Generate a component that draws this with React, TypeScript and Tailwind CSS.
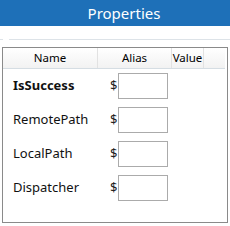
import React from "react";

const rows = [
  { name: "IsSuccess", bold: true },
  { name: "RemotePath", bold: false },
  { name: "LocalPath", bold: false },
  { name: "Dispatcher", bold: false },
];

export default function App() {
  return (
    <div
      className="w-[230px] h-[226px] bg-white flex flex-col overflow-hidden"
      style={{ fontFamily: '"Segoe UI", "Noto Sans", "Open Sans", sans-serif' }}
    >
      <div className="h-[26px] bg-[#1e70b8] flex items-center justify-center pl-[18px]">
        <span className="text-white text-[15px] leading-none">Properties</span>
      </div>
      <div className="mt-[13px] flex h-[1px]">
        <div className="w-[3px] bg-[#dde3e8]" />
        <div className="w-[6px]" />
        <div className="flex-1 bg-[#dde3e8]" />
      </div>
      <div className="mt-[7px] ml-[2px] w-[226px] h-[176px] border border-[#8a8a8a] flex flex-col">
        <div className="h-[21px] mr-[2px] flex border-b border-[#d5dde3] bg-gradient-to-b from-white to-[#f2f2f2] text-[11.5px] text-black leading-none">
          <div className="w-[95px] border-r border-[#e2e2e2] flex items-center justify-center">Name</div>
          <div className="w-[74px] border-r border-[#e2e2e2] flex items-center justify-center">Alias</div>
          <div className="w-[32px] border-r border-[#e2e2e2] flex items-center justify-center">Value</div>
          <div className="flex-1" />
        </div>
        <div className="mt-[4px] flex flex-col gap-[8px]">
          {rows.map((r) => (
            <div key={r.name} className="h-[26px] flex items-center">
              <div
                className={
                  "w-[107px] pl-[10px] text-[13px] text-[#111] " +
                  (r.bold ? "font-bold" : "")
                }
              >
                {r.name}
              </div>
              <div className="w-[8px] text-[13px] text-[#222]">$</div>
              <div className="w-[50px] h-[26px] border border-[#ababab] bg-white" />
            </div>
          ))}
        </div>
      </div>
    </div>
  );
}
